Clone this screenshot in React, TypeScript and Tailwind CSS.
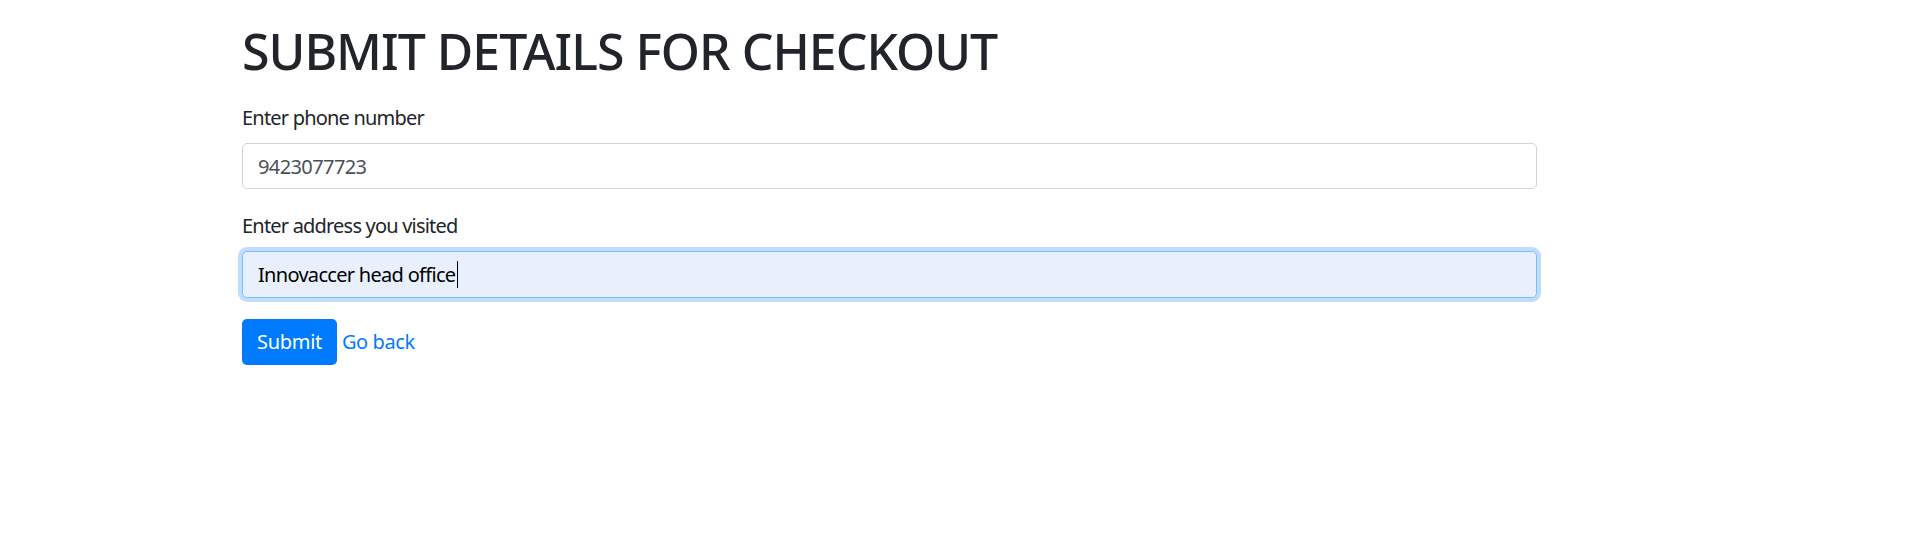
import { useState } from 'react'

export default function App() {
  const [phone, setPhone] = useState('9423077723')
  const [address, setAddress] = useState('Innovaccer head office')

  return (
    <div className="min-h-[552px] bg-white text-[#212529]" style={{ fontFamily: '"Noto Sans", "Open Sans", sans-serif' }}>
      <div className="ml-[242px] w-[1295px] pt-[21px]">
        <h1 className="text-[50px] font-medium leading-[1.2] tracking-[-1px] mb-[22px]">SUBMIT DETAILS FOR CHECKOUT</h1>
        <form onSubmit={(e) => { e.preventDefault() }} className="tracking-[-0.8px]">
          <div className="mb-[22px]">
            <label htmlFor="phone" className="block text-[20px] leading-[30px] mb-[10px]">Enter phone number</label>
            <input
              id="phone"
              type="text"
              value={phone}
              onChange={(e) => { setPhone(e.target.value) }}
              className="block w-full h-[46px] px-[15px] text-[20px] tracking-[-0.6px] text-[#495057] bg-white border border-[#ced4da] rounded-[5px] outline-none" />
          </div>
          <div className="mb-[21px]">
            <label htmlFor="address" className="block text-[20px] leading-[30px] mb-[10px]">Enter address you visited</label>
            <div className="relative">
              <input
                id="address"
                type="text"
                value={address}
                onChange={(e) => { setAddress(e.target.value) }}
                className="block w-full h-[47px] px-[15px] text-[20px] tracking-[-0.7px] text-black bg-[#e8f0fe] border border-[#80bdff] rounded-[5px] outline-none shadow-[0_0_0_4px_rgba(0,123,255,0.25)] caret-transparent" />
              <span className="absolute left-[215px] top-[10px] w-px h-[27px] bg-black pointer-events-none" />
            </div>
          </div>
          <div className="flex items-center gap-[5px]">
            <button
              type="submit"
              className="h-[46px] px-[15px] text-[20px] text-white bg-[#007bff] rounded-[5px] tracking-[-0.3px]">
              Submit
            </button>
            <a href="#" className="text-[20px] text-[#007bff] tracking-[-0.4px]">Go back</a>
          </div>
        </form>
      </div>
    </div>
  )
}
